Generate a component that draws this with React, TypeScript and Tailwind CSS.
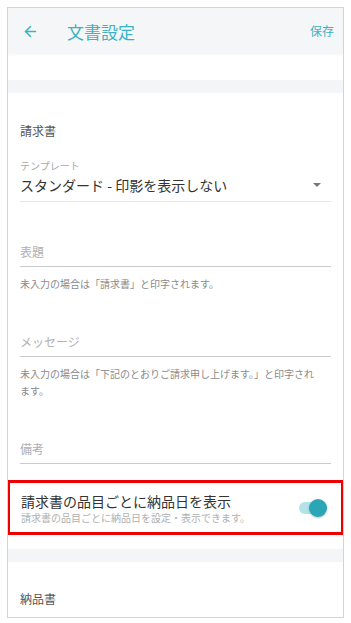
import { ArrowLeft } from 'lucide-react'

const font = { fontFamily: '"Noto Sans CJK JP", "Noto Sans", sans-serif' }

function TextField({ label, help }: { label: string; help?: React.ReactNode }) {
  return (
    <div className="px-[12px]">
      <div className="border-b-[1.5px] border-[#c9cccf] pb-[4px] text-[12px] leading-[20px] text-[#b0b0b0]">{label}</div>
      {help && <p className="mt-[8px] text-[10px] leading-[17px] text-[#8a8a8a]">{help}</p>}
    </div>
  )
}

export default function App() {
  return (
    <div className="min-h-[623px] bg-white p-[7px]" style={font}>
      <div className="h-[611px] overflow-hidden border border-[#d4d4d4] bg-white">
        <div className="flex h-[46px] items-center bg-[#f4f6f8] pl-[14px] pr-[9px] shadow-[0_1px_2px_rgba(0,0,0,0.04)]">
          <ArrowLeft size={17} strokeWidth={2.2} className="text-[#3cb3c4]" />
          <h1 className="ml-[28px] flex-1 text-[17px] leading-none text-[#3cb3c4]">文書設定</h1>
          <span className="text-[12px] text-[#3cb3c4]">保存</span>
        </div>

        <div className="h-[26px]" />
        <div className="h-[13px] bg-[#f4f5f7]" />

        <div className="pt-[30px] pb-[14px]">
          <div className="px-[12px] text-[12px] leading-[16px] text-[#555]">請求書</div>

          <div className="mt-[20px] px-[12px]">
            <div className="text-[10px] leading-[14px] text-[#a8a8a8]">テンプレート</div>
            <div className="mt-[1px] flex items-center justify-between border-b border-[#e3e8ec] pb-[5px]">
              <span className="text-[14px] leading-[22px] text-[#333]">スタンダード - 印影を表示しない</span>
              <span className="mr-[10px] h-0 w-0 border-x-[4px] border-t-[4px] border-x-transparent border-t-[#777]" />
            </div>
          </div>

          <div className="mt-[40px]">
            <TextField label="表題" help="未入力の場合は「請求書」と印字されます。" />
          </div>
          <div className="mt-[40px]">
            <TextField
              label="メッセージ"
              help={<>未入力の場合は「下記のとおりご請求申し上げます。」と印字され<br />ます。</>}
            />
          </div>
          <div className="mt-[40px]">
            <TextField label="備考" />
          </div>
        </div>

        <div className="-mx-px mt-[2px] flex h-[55px] items-center border-[3px] border-[#ee0000] pl-[11px] pr-[14px]">
          <div className="flex-1">
            <div className="text-[14px] leading-[20px] text-[#333]">請求書の品目ごとに納品日を表示</div>
            <div className="text-[10px] leading-[14px] text-[#b0b0b0]">請求書の品目ごとに納品日を設定・表示できます。</div>
          </div>
          <div className="relative h-[18px] w-[28px]">
            <div className="absolute left-0 top-[3px] h-[12px] w-[26px] rounded-full bg-[#b3e3ea]" />
            <div className="absolute right-0 top-0 h-[18px] w-[18px] rounded-full bg-[#2aa6b6] shadow-[0_1px_2px_rgba(0,0,0,0.25)]" />
          </div>
        </div>

        <div className="h-[14px]" />
        <div className="h-[13px] bg-[#f4f5f7]" />
        <div className="px-[12px] pt-[29px] text-[12px] leading-[16px] text-[#555]">納品書</div>
      </div>
    </div>
  )
}
